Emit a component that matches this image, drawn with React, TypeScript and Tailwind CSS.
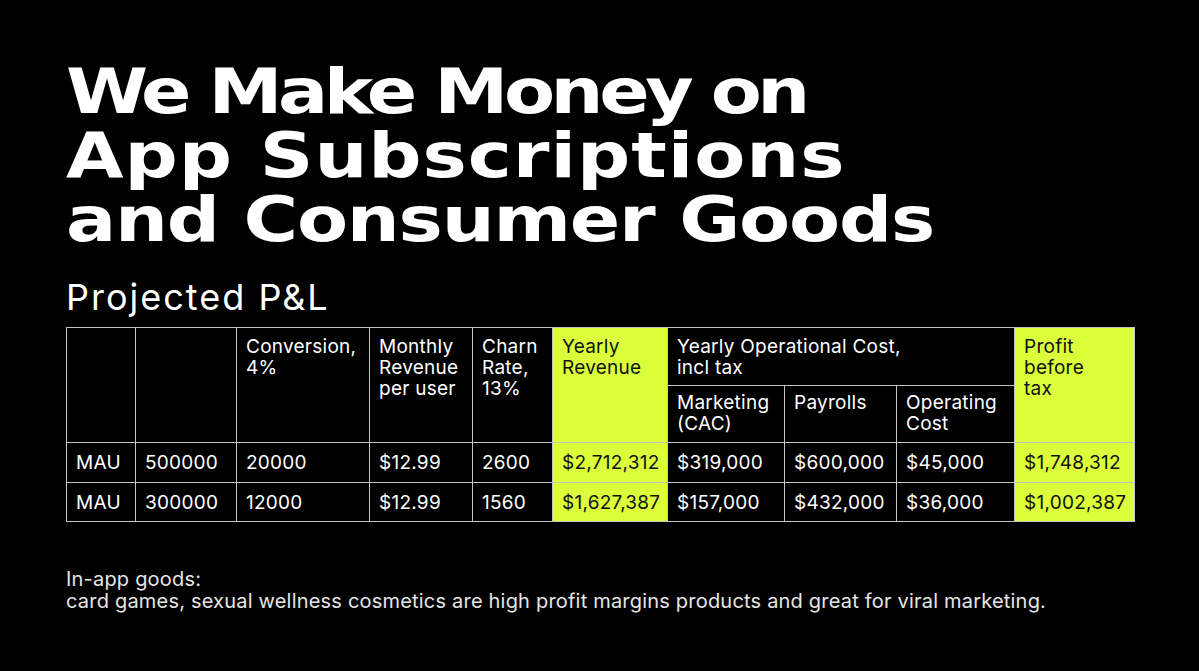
const ROWS = [
  ['MAU', '500000', '20000', '$12.99', '2600', '$2,712,312', '$319,000', '$600,000', '$45,000', '$1,748,312'],
  ['MAU', '300000', '12000', '$12.99', '1560', '$1,627,387', '$157,000', '$432,000', '$36,000', '$1,002,387'],
];

const WIDTHS = ['w-[69px]', 'w-[101px]', 'w-[133px]', 'w-[103px]', 'w-[80px]', 'w-[115px]', 'w-[117px]', 'w-[112px]', 'w-[118px]', 'w-[120px]'];

const GREEN = [5, 9];

const cell = 'border border-[#c4c4c4] px-[9px]';
const head = `${cell} align-top text-left font-normal`;
const green = 'bg-[#dbff3b] text-[#111]';

export default function App() {
  return (
    <div className="w-[1199px] h-[671px] bg-black text-white pl-[66px] pt-[60px] font-['Inter',sans-serif] overflow-hidden">
      {/* Title */}
      <h1 className="font-['DejaVu_Sans',sans-serif] font-bold text-[62px] leading-[64px]">
        <span className="inline-block origin-left scale-x-[1.2] tracking-[-3.7px]">We Make Money on</span>
        <br />
        <span className="inline-block origin-left scale-x-[1.2] tracking-[0.8px]">App Subscriptions</span>
        <br />
        <span className="inline-block origin-left scale-x-[1.2] tracking-[-1px]">and Consumer Goods</span>
      </h1>

      <h2 className="mt-[25px] text-[36px] leading-[40px] font-normal tracking-[2px]">Projected P&amp;L</h2>

      {/* P&L table */}
      <table className="mt-[10px] w-[1069px] table-fixed border-collapse text-[19px] leading-[21px] tracking-[0.25px]">
        <colgroup>
          {WIDTHS.map((w, i) => (
            <col key={i} className={w} />
          ))}
        </colgroup>
        <thead>
          <tr className="h-[58px]">
            <th rowSpan={2} className={cell} />
            <th rowSpan={2} className={cell} />
            <th rowSpan={2} className={`${head} pt-[8px]`}>
              Conversion,
              <br />
              4%
            </th>
            <th rowSpan={2} className={`${head} pt-[8px]`}>
              Monthly
              <br />
              Revenue
              <br />
              per user
            </th>
            <th rowSpan={2} className={`${head} pt-[8px]`}>
              Charn
              <br />
              Rate,
              <br />
              13%
            </th>
            <th rowSpan={2} className={`${head} pt-[8px] ${green}`}>
              Yearly
              <br />
              Revenue
            </th>
            <th colSpan={3} className={`${head} pt-[8px]`}>
              Yearly Operational Cost,
              <br />
              incl tax
            </th>
            <th rowSpan={2} className={`${head} pt-[8px] ${green}`}>
              Profit
              <br />
              before
              <br />
              tax
            </th>
          </tr>
          <tr className="h-[57px]">
            <th className={`${head} pt-[6px]`}>
              Marketing
              <br />
              (CAC)
            </th>
            <th className={`${head} pt-[6px]`}>Payrolls</th>
            <th className={`${head} pt-[6px]`}>
              Operating
              <br />
              Cost
            </th>
          </tr>
        </thead>
        <tbody>
          {ROWS.map((row, r) => (
            <tr key={r} className={r === 0 ? 'h-[40px]' : 'h-[39px]'}>
              {row.map((v, i) => (
                <td key={i} className={`${cell} align-middle whitespace-nowrap ${GREEN.includes(i) ? green : ''}`}>
                  {v}
                </td>
              ))}
            </tr>
          ))}
        </tbody>
      </table>

      <p className="mt-[46px] text-[20px] leading-[22px] tracking-[0.2px] text-[#e6e6e6]">
        In-app goods:
        <br />
        card games, sexual wellness cosmetics are high profit margins products and great for viral marketing.
      </p>
    </div>
  );
}
